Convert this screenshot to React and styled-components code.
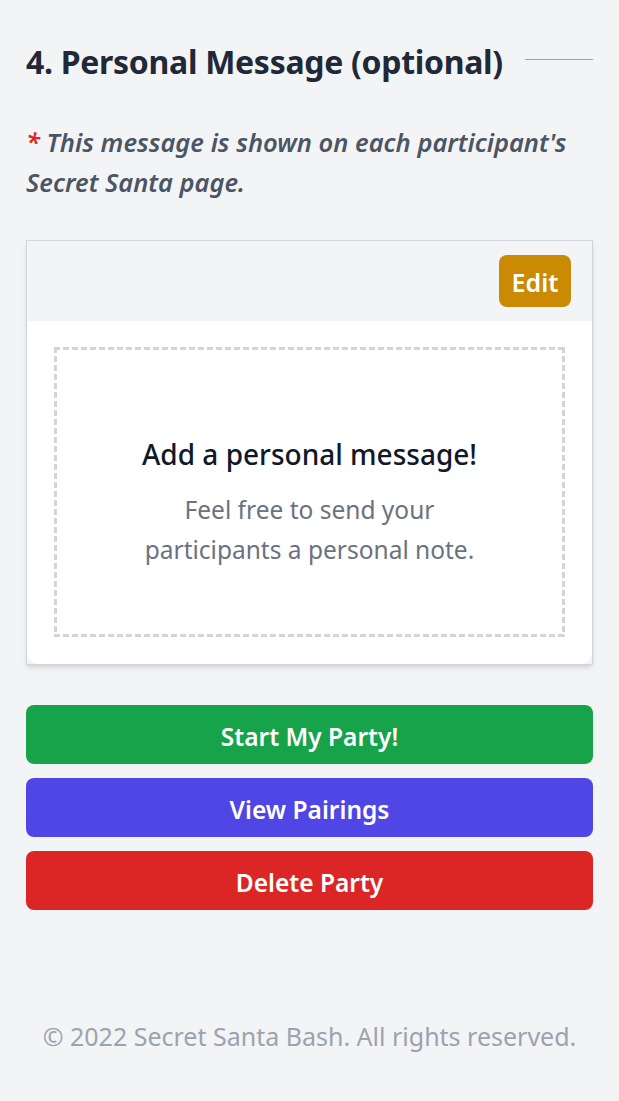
import React from "react";
import styled, { createGlobalStyle } from "styled-components";

const GlobalStyle = createGlobalStyle`
  html, body {
    margin: 0;
    padding: 0;
    background: #f3f4f6;
    font-family: "Noto Sans", "Open Sans", sans-serif;
  }
  * { box-sizing: border-box; }
`;

export default function App() {
  return (
    <>
      <GlobalStyle />
      <Page>
        <Section>
          <HeadingRow>
            <h2>4. Personal Message (optional)</h2>
            <Rule />
          </HeadingRow>
          <Note>
            <Star>*</Star> This message is shown on each participant's
            Secret Santa page.
          </Note>
          <Card>
            <CardHeader>
              <EditButton>Edit</EditButton>
            </CardHeader>
            <CardBody>
              <EmptyBox>
                <h3>Add a personal message!</h3>
                <p>
                  Feel free to send your
                  <br />
                  participants a personal note.
                </p>
              </EmptyBox>
            </CardBody>
          </Card>
          <Actions>
            <ActionButton $bg="#16a34a">Start My Party!</ActionButton>
            <ActionButton $bg="#4f46e5">View Pairings</ActionButton>
            <ActionButton $bg="#dc2626">Delete Party</ActionButton>
          </Actions>
        </Section>
        <Footer>© 2022 Secret Santa Bash. All rights reserved.</Footer>
      </Page>
    </>
  );
}

const Page = styled.div`
  min-height: 1101px;
  padding: 0 26px;
`;

const Section = styled.main`
  padding-top: 38px;
`;

const HeadingRow = styled.div`
  display: flex;
  align-items: center;
  gap: 22px;
  h2 {
    margin: 0;
    font-size: 32px;
    line-height: 48px;
    font-weight: 700;
    color: #1f2937;
    white-space: nowrap;
    letter-spacing: -0.3px;
  }
`;

const Rule = styled.div`
  flex: 1;
  height: 1px;
  background: #9ca3af;
  margin-top: -6px;
`;

const Note = styled.p`
  margin: 36px 0 0;
  font-size: 25.5px;
  line-height: 40px;
  font-style: italic;
  font-weight: 600;
  color: #4b5563;
`;

const Star = styled.span`
  color: #dc2626;
`;

const Card = styled.div`
  margin-top: 38px;
  border: 1px solid #d1d5db;
  background: #f3f4f6;
  box-shadow: 0 4px 6px -1px rgba(0, 0, 0, 0.1), 0 2px 4px -2px rgba(0, 0, 0, 0.1);
`;

const CardHeader = styled.div`
  display: flex;
  justify-content: flex-end;
  height: 80px;
  padding: 14px 21px 0;
`;

const EditButton = styled.button`
  height: 52px;
  width: 72px;
  border: none;
  border-radius: 8px;
  background: #ca8a04;
  color: #fff;
  font-family: inherit;
  font-size: 25px;
  font-weight: 600;
  padding: 2px 0 0;
`;

const CardBody = styled.div`
  background: #fff;
  padding: 26px 27px 27px;
  border-radius: 0 0 12px 12px;
`;

const dashH = "linear-gradient(90deg, #d1d5db 6px, transparent 6px)";
const dashV = "linear-gradient(180deg, #d1d5db 6px, transparent 6px)";

const EmptyBox = styled.div`
  height: 290px;
  background:
    ${dashH} left top / 9px 3px repeat-x,
    ${dashH} left bottom / 9px 3px repeat-x,
    ${dashV} left top / 3px 9px repeat-y,
    ${dashV} right top / 3px 9px repeat-y;
  display: flex;
  flex-direction: column;
  align-items: center;
  justify-content: center;
  text-align: center;
  padding-top: 20px;
  h3 {
    margin: 0;
    font-size: 28px;
    line-height: 40px;
    font-weight: 500;
    color: #111827;
  }
  p {
    margin: 16px 0 0;
    font-size: 24.5px;
    line-height: 40px;
    color: #6b7280;
  }
`;

const Actions = styled.div`
  margin-top: 40px;
  display: flex;
  flex-direction: column;
  gap: 14px;
`;

const ActionButton = styled.button`
  height: 59px;
  width: 100%;
  border: none;
  border-radius: 8px;
  background: ${(p) => p.$bg};
  color: #fff;
  font-family: inherit;
  font-size: 24.5px;
  font-weight: 600;
  padding: 4px 0 0;
`;

const Footer = styled.footer`
  margin-top: 106px;
  text-align: center;
  font-size: 25px;
  line-height: 40px;
  color: #9ca3af;
`;
